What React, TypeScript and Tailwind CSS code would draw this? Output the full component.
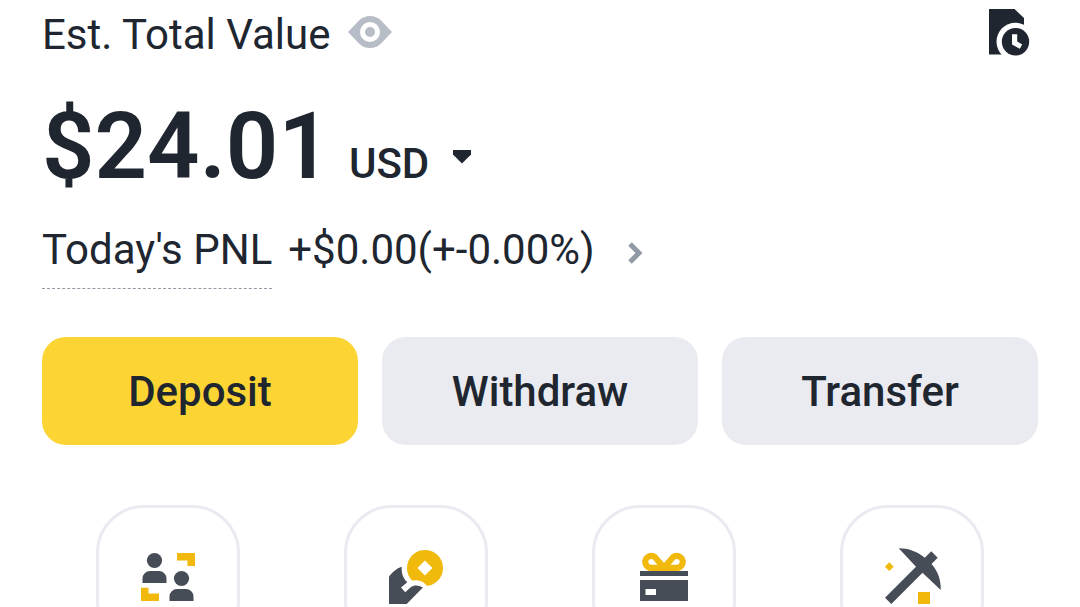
import type { ReactNode } from 'react';

const EyeIcon = () => (
    <svg width="44" height="32" viewBox="0 0 44 32" aria-hidden="true">
        <path d="M0 16 11 4.500C14 1.500 18 0 22 0s8 1.500 11 4.500L44 16 33 27.500C30 30.500 26 32 22 32s-8-1.500-11-4.500z" fill="#B7BDC6" />
        <circle cx="22" cy="16" r="7.500" fill="none" stroke="#fff" strokeWidth="5" />
    </svg>
);

const HistoryIcon = () => (
    <svg width="54" height="54" viewBox="0 0 54 54" aria-hidden="true">
        <path d="M5 4h25.500L40 13v36.500H5z" fill="#202630" />
        <circle cx="31.500" cy="36.700" r="19" fill="#fff" />
        <circle cx="31.500" cy="36.700" r="13.700" fill="#202630" />
        <path d="M28 29.300h5.200v7.200l5 3-2.400 4.300L28 39.500z" fill="#fff" />
    </svg>
);

const P2PIcon = () => (
    <svg width="72" height="72" viewBox="0 0 72 72" aria-hidden="true">
        <g fill="#474D57">
            <circle cx="22.500" cy="19.500" r="7.600" />
            <path d="M10.500 42v-4.500a7.500 7.500 0 0 1 7.500-7.500h9a7.500 7.500 0 0 1 7.500 7.500V42z" />
            <circle cx="49.500" cy="37.500" r="7.600" />
            <path d="M37.500 60v-4.500a7.500 7.500 0 0 1 7.500-7.500h9a7.500 7.500 0 0 1 7.500 7.500V60z" />
        </g>
        <path d="M45 12h18v13h-7.500v-5.500H45zM9 46.800h7.500v5.700H27V60H9z" fill="#F0B90B" />
    </svg>
);

const EarnIcon = () => (
    <svg width="72" height="72" viewBox="0 0 72 72" aria-hidden="true">
        <circle cx="45" cy="27" r="18" fill="#F0B90B" />
        <path d="m45 19.500 7.500 7.500-7.500 7.500-7.500-7.500z" fill="#fff" />
        <path d="M47.500 45.500C43.500 40 38 38 31.500 39.800L28 47h18z" fill="#fff" />
        <path d="M9 35.700c3.200-4.500 7.600-8.500 12.700-10 -.4 6.300 1.300 11.600 5.600 15.600L21 46.500l4.200 4.700 5.500-5c3.600-2.700 8-2.200 12.200.3L26.700 63H9z" fill="#474D57" />
    </svg>
);

const GiftCardIcon = () => (
    <svg width="72" height="72" viewBox="0 0 72 72" aria-hidden="true">
        <path
            d="M36 26.500 28.500 18A6 6 0 1 0 24 26.800h24A6 6 0 1 0 43.500 18z"
            fill="none"
            stroke="#F0B90B"
            strokeWidth="6.200"
        />
        <path d="M12 30h48v5H12zM12 39h48v21H12z" fill="#474D57" />
        <path d="M17.500 48H28v6H17.500z" fill="#fff" />
    </svg>
);

const MiningIcon = () => (
    <svg width="72" height="72" viewBox="0 0 72 72" aria-hidden="true">
        <path
            d="M22.700 7.300c9.800 0 18.500 3.200 26 9.400l6.600-6.400 6.400 6.400-6.200 6.300c6.500 7.200 9.600 16 9.200 26L46.500 31.700 15.300 63 9 56.700l31-31z"
            fill="#474D57"
        />
        <path d="m13.300 21.300 4.400 4.400-4.400 4.400-4.400-4.400zM42 51h12v12H42z" fill="#F0B90B" />
    </svg>
);

interface Shortcut {
    name: string;
    icon: ReactNode;
}

const shortcuts: Shortcut[] = [
    { name: 'P2P', icon: <P2PIcon /> },
    { name: 'Earn', icon: <EarnIcon /> },
    { name: 'Gift Card', icon: <GiftCardIcon /> },
    { name: 'Mining', icon: <MiningIcon /> },
];

const App = () => {
    return (
        <main className="h-screen overflow-hidden bg-white font-['Roboto',sans-serif] text-[#202630]">
            {/* Balance */}
            <section className="px-[42px] pt-[5px]">
                <div className="flex items-start justify-between">
                    <div className="flex items-center gap-[18px]">
                        <h1 className="text-[42px] leading-[60px]">Est. Total Value</h1>
                        <button type="button" aria-label="Hide balance" className="pb-1.5">
                            <EyeIcon />
                        </button>
                    </div>
                    <button type="button" aria-label="History">
                        <HistoryIcon />
                    </button>
                </div>

                <div className="mt-[22px] flex items-baseline gap-[18px]">
                    <span className="text-[92px] leading-[120px] font-semibold">$24.01</span>
                    <button type="button" className="flex items-center gap-6 text-[42px] leading-[60px] font-medium">
                        USD
                        <svg className="mb-3.5" width="18" height="14" viewBox="0 0 18 14" aria-hidden="true">
                            <path d="M0 0h18v4.500L9 13.500 0 4.500z" fill="#202630" />
                        </svg>
                    </button>
                </div>

                {/* Today's PNL */}
                <div className="mt-[13px] flex items-start gap-4 text-[42px] leading-[60px]">
                    <span className="border-b border-dashed border-[#929AA5] pb-2">Today's PNL</span>
                    <button type="button" className="flex items-center gap-8">
                        +$0.00(+-0.00%)
                        <svg className="mt-1.5" width="18" height="24" viewBox="0 0 18 24" aria-hidden="true">
                            <path d="m3 3 9 9-9 9" fill="none" stroke="#929AA5" strokeWidth="5" />
                        </svg>
                    </button>
                </div>
            </section>

            {/* Actions */}
            <div className="mt-12 grid grid-cols-3 gap-6 px-[42px] text-[42px] font-medium">
                <button type="button" className="h-[108px] rounded-3xl bg-[#FCD535]">Deposit</button>
                <button type="button" className="h-[108px] rounded-3xl bg-[#EAEBF0]">Withdraw</button>
                <button type="button" className="h-[108px] rounded-3xl bg-[#EAEBF0]">Transfer</button>
            </div>

            {/* Shortcuts */}
            <nav className="mt-[60px] grid grid-cols-4 justify-items-center px-11">
                {shortcuts.map((shortcut) => (
                    <button
                        key={shortcut.name}
                        type="button"
                        aria-label={shortcut.name}
                        className="flex size-36 items-center justify-center rounded-[48px] border-3 border-[#EAEBF0]"
                    >
                        {shortcut.icon}
                    </button>
                ))}
            </nav>
        </main>
    );
};

export default App;
